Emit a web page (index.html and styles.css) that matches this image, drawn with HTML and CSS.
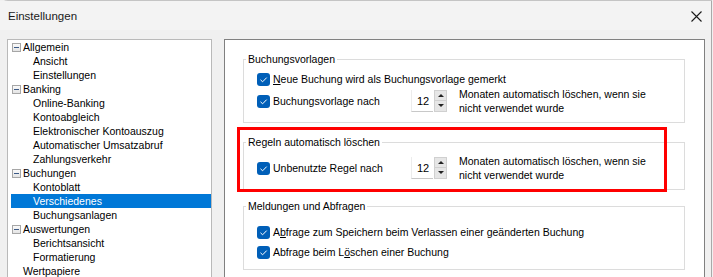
FILE: index.html
```html
<!DOCTYPE html>
<html lang="de">
<head>
    <meta charset="UTF-8">
    <title>Einstellungen</title>
    <link rel="stylesheet" href="styles.css">
</head>
<body>

    <div class="window">

        <!-- Titelleiste -->
        <div class="titlebar">
            <span class="title">Einstellungen</span>
            <svg class="close" width="11" height="11" viewBox="0 0 11 11">
                <path d="M0.5 0.5 L10.5 10.5 M10.5 0.5 L0.5 10.5" stroke="#1a1a1a" stroke-width="1.1" fill="none"/>
            </svg>
        </div>

        <div class="content">

            <!-- Navigationsbaum -->
            <ul class="tree">
                <li class="node"><span class="toggle"></span>Allgemein</li>
                <li class="leaf">Ansicht</li>
                <li class="leaf">Einstellungen</li>
                <li class="node"><span class="toggle"></span>Banking</li>
                <li class="leaf">Online-Banking</li>
                <li class="leaf">Kontoabgleich</li>
                <li class="leaf">Elektronischer Kontoauszug</li>
                <li class="leaf">Automatischer Umsatzabruf</li>
                <li class="leaf">Zahlungsverkehr</li>
                <li class="node"><span class="toggle"></span>Buchungen</li>
                <li class="leaf">Kontoblatt</li>
                <li class="leaf selected">Verschiedenes</li>
                <li class="leaf">Buchungsanlagen</li>
                <li class="node"><span class="toggle"></span>Auswertungen</li>
                <li class="leaf">Berichtsansicht</li>
                <li class="leaf">Formatierung</li>
                <li class="node plain">Wertpapiere</li>
            </ul>

            <!-- Einstellungsseite -->
            <div class="page">

                <fieldset class="group">
                    <legend>Buchungsvorlagen</legend>
                    <div class="group-body">
                        <div class="row row-single">
                            <span class="check"></span>
                            <span><u>N</u>eue Buchung wird als Buchungsvorlage gemerkt</span>
                        </div>
                        <div class="row">
                            <span class="check"></span>
                            <span class="row-label">Buchungsvorlage nach</span>
                            <div class="spinner">
                                <span class="spin-value">12</span>
                                <span class="spin-buttons">
                                    <span class="spin-up"></span>
                                    <span class="spin-down"></span>
                                </span>
                            </div>
                            <span class="spin-text">Monaten automatisch löschen, wenn sie<br>nicht verwendet wurde</span>
                        </div>
                    </div>
                </fieldset>

                <fieldset class="group group-rules">
                    <legend>Regeln automatisch löschen</legend>
                    <div class="group-body">
                        <div class="row">
                            <span class="check"></span>
                            <span class="row-label">Unbenutzte Regel nach</span>
                            <div class="spinner">
                                <span class="spin-value">12</span>
                                <span class="spin-buttons">
                                    <span class="spin-up"></span>
                                    <span class="spin-down"></span>
                                </span>
                            </div>
                            <span class="spin-text">Monaten automatisch löschen, wenn sie<br>nicht verwendet wurde</span>
                        </div>
                    </div>
                </fieldset>

                <fieldset class="group group-messages">
                    <legend>Meldungen und Abfragen</legend>
                    <div class="group-body">
                        <div class="row row-check">
                            <span class="check"></span>
                            <span>A<u>b</u>frage zum Speichern beim Verlassen einer geänderten Buchung</span>
                        </div>
                        <div class="row row-check">
                            <span class="check"></span>
                            <span>Abfrage beim L<u>ö</u>schen einer Buchung</span>
                        </div>
                    </div>
                </fieldset>

                <!-- rote Markierung -->
                <div class="marker"></div>
            </div>

        </div>
    </div>

</body>
</html>
```

FILE: styles.css
```css
html, body {
    margin: 0;
    background-color: #f0f0f0;
}
body {
    font-family: "Liberation Sans", Arial, sans-serif;
    font-size: 10.5px;
    color: #000;
    height: 277px;
    overflow: hidden;
}
.window {
    width: 712px;
    height: 290px;
    box-sizing: border-box;
    background-color: #f0f0f0;
    border-right: 1px solid #a9a9a9;
    border-top: 1px solid #c4c4c4;
    border-top-left-radius: 8px;
}
.titlebar {
    height: 29px;
    display: flex;
    align-items: center;
    justify-content: space-between;
    padding: 0 9px 0 8px;
    background-color: #f3f3f3;
}
.title {
    font-size: 11.5px;
    color: #1a1a1a;
}
.close {
    display: block;
    margin-top: 1px;
}
.content {
    display: flex;
    padding: 9px 6px 0 7px;
}

/* Baum */
.tree {
    list-style: none;
    margin: 0;
    padding: 0 0 0 3px;
    width: 205px;
    height: 250px;
    box-sizing: border-box;
    background-color: white;
    border: 1px solid #b9b9b9;
    border-bottom: none;
}
.tree li {
    height: 14px;
    line-height: 14px;
    white-space: nowrap;
}
.tree .node {
    display: flex;
    align-items: center;
    padding-left: 1px;
}
.tree .plain {
    padding-left: 12px;
}
.tree .leaf {
    padding-left: 22px;
}
.tree .selected {
    background-color: #0078d7;
    color: white;
}
.toggle {
    width: 9px;
    height: 9px;
    box-sizing: border-box;
    border: 1px solid #a6a6a6;
    background: linear-gradient(#fafafa, #e4e4e4);
    margin-right: 2px;
    position: relative;
}
.toggle::after {
    content: "";
    position: absolute;
    left: 1px;
    top: 3px;
    width: 5px;
    height: 1px;
    background-color: #3c5a86;
}

/* Seite rechts */
.page {
    position: relative;
    margin-left: 12px;
    width: 481px;
    height: 250px;
    box-sizing: border-box;
    background-color: white;
    border: 1px solid #808080;
    border-bottom: none;
    padding: 12px 0 0 18px;
}
.group {
    width: 442px;
    box-sizing: border-box;
    margin: 0;
    padding: 0;
    border: 1px solid #dcdcdc;
}
.group legend {
    margin-left: 2px;
    padding: 0 2px;
    line-height: 14px;
}
.group-rules {
    margin-top: 12px;
}
.group-messages {
    margin-top: 9px;
}
.group-body {
    padding: 5px 0 7px 13px;
}
.group-messages .group-body {
    padding-top: 9px;
}
.row {
    display: flex;
    align-items: center;
    white-space: nowrap;
}
.row-single {
    height: 16px;
}
.row-check {
    height: 20px;
}
.check {
    width: 13px;
    height: 13px;
    flex: none;
    margin-right: 3px;
    border-radius: 3px;
    background-color: #005fb8;
    background-image: url("data:image/svg+xml,%3Csvg xmlns='http://www.w3.org/2000/svg' width='13' height='13'%3E%3Cpath d='M3.5 6.8 L5.6 8.8 L9.7 4.6' stroke='white' stroke-width='1' fill='none'/%3E%3C/svg%3E");
}
.row-label {
    width: 138px;
    flex: none;
}
.spinner {
    display: flex;
    height: 22px;
    flex: none;
}
.spin-value {
    width: 22px;
    box-sizing: border-box;
    padding-left: 5px;
    line-height: 22px;
    font-size: 11px;
    background-color: white;
    border-left: 1px solid #ececec;
    border-bottom: 1px solid #c8c8c8;
}
.spin-buttons {
    display: flex;
    flex-direction: column;
    margin-left: 1px;
}
.spin-up, .spin-down {
    width: 13px;
    height: 11px;
    box-sizing: border-box;
    background-color: #e6e6e6;
    border: 1px solid #d0d0d0;
    position: relative;
}
.spin-down {
    border-top: none;
}
.spin-up::after, .spin-down::after {
    content: "";
    position: absolute;
    left: 3px;
    top: 3px;
    border-left: 3px solid transparent;
    border-right: 3px solid transparent;
}
.spin-up::after {
    border-bottom: 3px solid #222;
}
.spin-down::after {
    top: 3px;
    border-top: 3px solid #222;
}
.spin-text {
    margin-left: 12px;
    line-height: 14px;
}

/* rote Markierung */
.marker {
    position: absolute;
    left: 12px;
    top: 87px;
    width: 430px;
    height: 65px;
    box-sizing: border-box;
    border: 3px solid #ff0000;
}
```
